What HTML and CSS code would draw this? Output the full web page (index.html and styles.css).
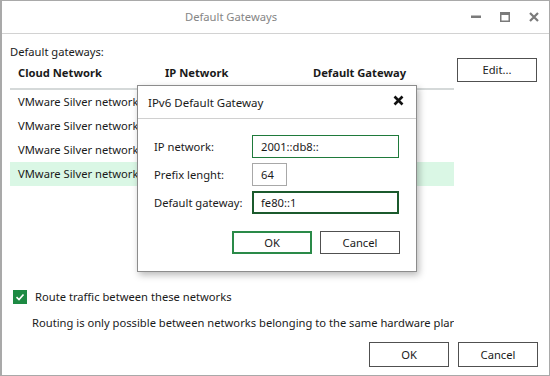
FILE: index.html
```html
<!DOCTYPE html>
<html>
<head>
<meta charset="utf-8">
<link rel="stylesheet" href="styles.css">
</head>
<body>
<div class="window">
  <div class="titlebar">
    <span class="title">Default Gateways</span>
    <div class="controls">
      <svg class="ctl" width="10" height="10" viewBox="0 0 10 10"><rect x="0" y="3.5" width="10" height="2.5" fill="#7a7a7a"/></svg>
      <svg class="ctl" width="10" height="10" viewBox="0 0 10 10"><rect x="0.75" y="0.75" width="8.5" height="8.5" fill="none" stroke="#7a7a7a" stroke-width="1.5"/><rect x="0" y="0" width="10" height="3" fill="#7a7a7a"/></svg>
      <svg class="ctl" width="10" height="10" viewBox="0 0 10 10"><path d="M1 1 L9 9 M9 1 L1 9" stroke="#7a7a7a" stroke-width="2.2"/></svg>
    </div>
  </div>
  <div class="content">
    <div class="caption">Default gateways:</div>
    <div class="main">
      <div class="table">
        <div class="thead">
          <span>Cloud Network</span><span>IP Network</span><span>Default Gateway</span>
        </div>
        <div class="row"><span>VMware Silver network</span></div>
        <div class="row"><span>VMware Silver network</span></div>
        <div class="row"><span>VMware Silver network</span></div>
        <div class="row selected"><span>VMware Silver network</span></div>
      </div>
      <button class="btn edit">Edit...</button>
    </div>
    <label class="check">
      <span class="box"><svg width="14" height="14" viewBox="0 0 14 14"><path d="M3.5 7.2 L6 9.6 L10.5 4.4" fill="none" stroke="#fff" stroke-width="1.6"/></svg></span>
      <span>Route traffic between these networks</span>
    </label>
    <div class="note">Routing is only possible between networks belonging to the same hardware plar</div>
    <div class="footer">
      <button class="btn">OK</button>
      <button class="btn">Cancel</button>
    </div>
  </div>

  <div class="dialog">
    <div class="dlg-title">
      <span>IPv6 Default Gateway</span>
      <svg class="dlg-close" width="11" height="11" viewBox="0 0 11 11"><path d="M1.5 1.5 L9.5 9.5 M9.5 1.5 L1.5 9.5" stroke="#111" stroke-width="2.6"/></svg>
    </div>
    <div class="dlg-body">
      <div class="field"><span class="lbl">IP network:</span><div class="input green">2001::db8::</div></div>
      <div class="field"><span class="lbl">Prefix lenght:</span><div class="input short">64</div></div>
      <div class="field"><span class="lbl">Default gateway:</span><div class="input focus">fe80::1</div></div>
      <div class="dlg-buttons">
        <button class="btn ok">OK</button>
        <button class="btn">Cancel</button>
      </div>
    </div>
  </div>
</div>
</body>
</html>
```

FILE: styles.css
```css
* { box-sizing: border-box; }
html, body { margin: 0; padding: 0; background: #fff; }
body {
  font-family: "Noto Sans", "Liberation Sans", sans-serif;
  font-size: 11.2px;
  color: #1a1a1a;
}
.window {
  position: relative;
  width: 550px;
  height: 376px;
  border: 1px solid #a9a9a9;
  border-left-width: 2px;
  display: flex;
  flex-direction: column;
  background: #fff;
}
.titlebar {
  height: 33px;
  border-bottom: 1px solid #d2d2d2;
  display: flex;
  align-items: center;
}
.title {
  margin-left: 183px;
  color: #858585;
  font-size: 11.2px;
  line-height: 16px;
}
.controls {
  margin-left: auto;
  margin-right: 10px;
  display: flex;
  gap: 19px;
  align-items: center;
}
.ctl { display: block; }
.content {
  display: flex;
  flex-direction: column;
  padding-left: 8px;
}
.caption {
  padding-top: 11px;
  line-height: 14px;
  height: 25px;
}
.main {
  display: flex;
  align-items: flex-start;
}
.table { width: 444px; }
.thead {
  display: grid;
  grid-template-columns: 147px 148px 1fr;
  padding: 6px 0 7px 8px;
  line-height: 16px;
  font-weight: bold;
  border-bottom: 2px solid #d5d9d9;
}
.row {
  height: 24px;
  line-height: 24px;
  padding-left: 8px;
  white-space: nowrap;
}
.row.selected { background: #daf7e5; }
.btn {
  font-family: inherit;
  font-size: 11.2px;
  color: #1a1a1a;
  background: #fff;
  border: 1px solid #505050;
  border-radius: 0;
  width: 80px;
  height: 24px;
  padding: 0;
  margin: 0;
  line-height: 20px;
}
.edit { margin-left: 3px; margin-top: -1px; }
.check {
  display: flex;
  align-items: center;
  margin-top: 103px;
  line-height: 16px;
  gap: 8px;
  padding-left: 3px;
}
.box {
  width: 14px;
  height: 14px;
  background: #1d8a43;
  display: block;
}
.box svg { display: block; }
.note {
  margin-top: 10px;
  margin-left: 22px;
  width: 422px;
  overflow: hidden;
  white-space: nowrap;
  line-height: 16px;
}
.footer {
  margin-top: 11px;
  display: flex;
  justify-content: flex-end;
  gap: 9px;
  margin-right: 11px;
}
.footer .btn { height: 25px; }

.dialog {
  position: absolute;
  left: 135px;
  top: 84px;
  width: 280px;
  height: 187px;
  background: #fff;
  border: 1px solid #8c8c8c;
  box-shadow: 2px 3px 7px rgba(0,0,0,0.28);
}
.dlg-title {
  height: 33px;
  border-bottom: 1px solid #d0d0d0;
  display: flex;
  align-items: center;
  padding-left: 10px;
  padding-right: 12px;
  font-size: 11.5px;
}
.dlg-close { margin-left: auto; margin-top: -3px; display: block; }
.dlg-body {
  padding: 16px 0 0 16px;
}
.field {
  display: flex;
  align-items: center;
  margin-bottom: 5px;
}
.lbl { width: 98px; }
.input {
  width: 147px;
  height: 23px;
  line-height: 21px;
  padding-left: 8px;
  border: 1px solid #a8a8a8;
}
.input.green { border-color: #1f7a3b; }
.input.short { width: 35px; }
.input.focus { border: 2px solid #1b5a2d; padding-left: 7px; line-height: 19px; }
.dlg-buttons {
  display: flex;
  gap: 8px;
  margin-top: 17px;
  margin-left: 78px;
}
.dlg-buttons .btn { height: 23px; }
.btn.ok { border: 2px solid #2a8a48; }
```
